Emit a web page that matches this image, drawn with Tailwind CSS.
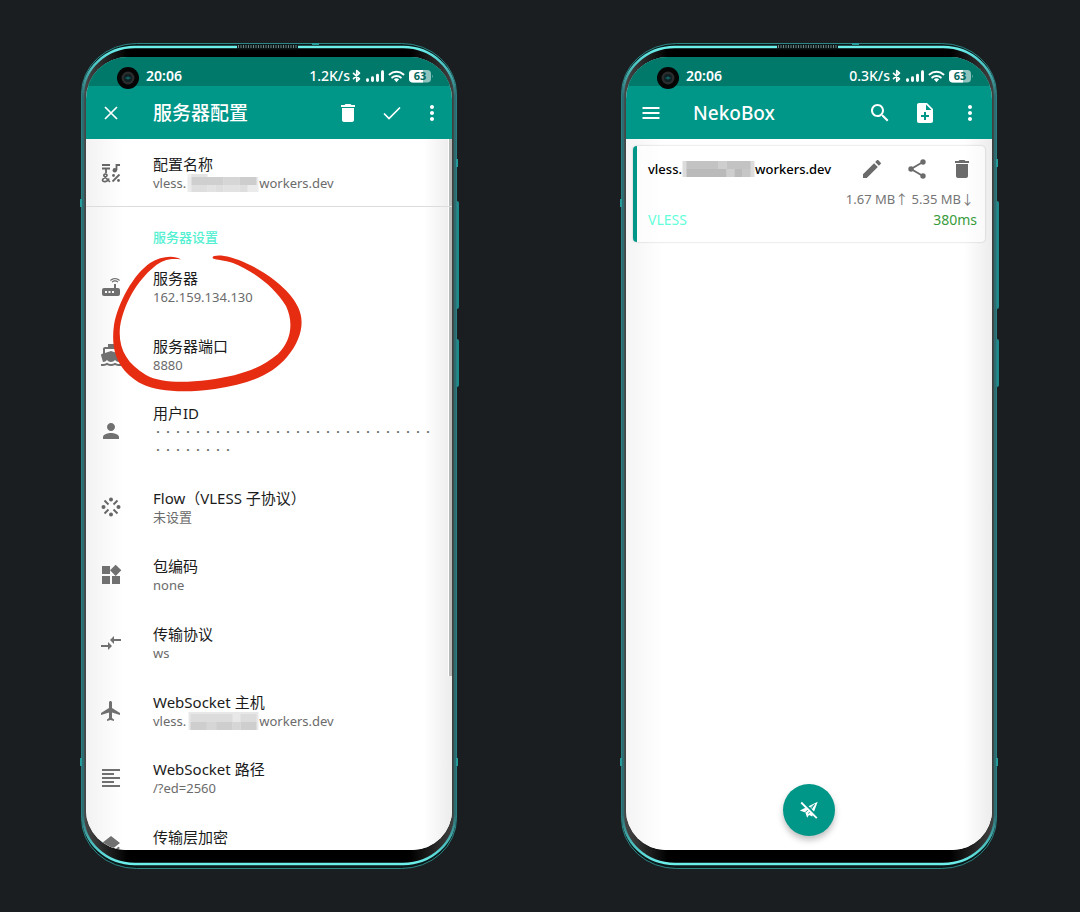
<!DOCTYPE html>
<html lang="zh-CN">
<head>
<meta charset="utf-8">
<meta name="viewport" content="width=device-width, initial-scale=1">
<title>NekoBox</title>
<script src="https://cdn.jsdelivr.net/npm/@tailwindcss/browser@4"></script>
</head>
<body class="min-h-screen bg-[#1a1e20] font-['Noto_Sans','Noto_Sans_CJK_SC',sans-serif] text-[#1b1b1b]">

<svg class="absolute size-0" aria-hidden="true">
  <defs>
    <linearGradient id="rim" x1="0" x2="0" y1="0" y2="1">
      <stop offset="0" stop-color="#6df0ec"/><stop offset=".02" stop-color="#4fc9c8"/><stop offset=".06" stop-color="#2c6c70"/>
      <stop offset=".94" stop-color="#2c6c70"/><stop offset=".98" stop-color="#4fc9c8"/><stop offset="1" stop-color="#6df0ec"/>
    </linearGradient>
    <linearGradient id="sheen" x1="0" x2="1" y1="0" y2="0">
      <stop offset="0" stop-color="#4a4a4a"/><stop offset=".12" stop-color="#000"/><stop offset=".88" stop-color="#000"/><stop offset="1" stop-color="#444"/>
    </linearGradient>
    <symbol id="frame" viewBox="0 0 380 828">
      <path d="M375 159h2q2 0 2 2v104q0 2-2 2h-2zM375 297h2q2 0 2 2v44q0 2-2 2h-2z" fill="#1f8a8b"/>
      <rect x="1.500" y="1.500" width="375" height="825" rx="55" ry="50" fill="#0b1819" stroke="#2c8585"/>
      <rect x="3" y="5" width="372" height="818" rx="52" ry="48" fill="url(#sheen)"/>
      <rect x="3" y="5" width="372" height="817" rx="52" ry="48" fill="none" stroke="url(#rim)" stroke-width="2.500"/>
      <path d="M157 5h61" stroke="#0d1718" stroke-width="5"/>
      <path d="M158 4.500h60" stroke="#6d8585" stroke-width="3" stroke-dasharray="1 1.500"/>
      <path d="M232 2h7M1 157v8M1 716v8M377 117v8M377 716v8" stroke="#259b9b" stroke-width="2"/>
    </symbol>
    <symbol id="camera" viewBox="0 0 22 22">
      <circle cx="11" cy="11" r="11" fill="#050505"/><circle cx="11" cy="11" r="6.500" fill="#2a2c2d"/><circle cx="11" cy="11" r="4" fill="#102022"/><path d="M8.500 11h5M11 9.500v3" stroke="#11777b"/>
    </symbol>
    <symbol id="status" viewBox="0 0 82 14">
      <path d="M1.500 4.300l6 5.500L4.700 12.500V1.500l2.800 2.700-6 5.500" fill="none" stroke="#fff" stroke-width="1.600" stroke-linejoin="round" stroke-linecap="round"/>
      <path d="M15.500 11.600v-.8M20.500 11.600V8.800M25.500 11.600V6.200M30.500 11.600V2.800" stroke="#fff" stroke-width="2.900" stroke-linecap="round"/>
      <path d="M37.500 5.400a10.500 10.500 0 0 1 14 0M40.200 8.600a6.300 6.300 0 0 1 8.600 0" fill="none" stroke="#fff" stroke-width="2" stroke-linecap="round"/>
      <path d="M41.900 10.300a4 4 0 0 1 5.200 0l-2.600 2.900z" fill="#fff"/>
      <rect x="57" y="1" width="22" height="12.500" rx="4" fill="#8fc3bd"/><path d="M61 1h10v12.500H61a4 4 0 0 1-4-4V5a4 4 0 0 1 4-4z" fill="#fff"/><path d="M80 5.500q1.500 1.700 0 3.500z" fill="#8fc3bd"/>
      <text x="68" y="11.200" text-anchor="middle" font-family="Noto Sans, sans-serif" font-size="11" font-weight="700" fill="#05695d">63</text>
    </symbol>
    <symbol id="trash" viewBox="0 0 24 24"><path fill="currentColor" d="M6 19c0 1.100.9 2 2 2h8c1.100 0 2-.9 2-2V7H6v12zM19 4h-3.500l-1-1h-5l-1 1H5v2h14V4z"/></symbol>
    <symbol id="more" viewBox="0 0 24 24"><path fill="currentColor" d="M12 8c1.100 0 2-.9 2-2s-.9-2-2-2-2 .9-2 2 .9 2 2 2zm0 2c-1.100 0-2 .9-2 2s.9 2 2 2 2-.9 2-2-.9-2-2-2zm0 6c-1.100 0-2 .9-2 2s.9 2 2 2 2-.9 2-2-.9-2-2-2z"/></symbol>
    <symbol id="mosaic-top" viewBox="0 0 72 18">
      <path fill="#ebebeb" d="M1 3h71v15H1z"/><path fill="#f0f0f0" d="M1 0h12v3H1z"/><path fill="#e4e4e4" d="M5 0h16v3H5z"/><path fill="#cfcfcf" d="M5 3h32v8H5z"/><path fill="#d6d6d6" d="M37 3h16v8H37z"/><path fill="#cdcdcd" d="M53 3h17v8H53z"/><path fill="#dedede" d="M5 11h16v7H5zM29 11h8v7h-8zM53 11h8v7h-8z"/><path fill="#e2e2e2" d="M21 11h8v7h-8zM37 11h16v7H37z"/>
    </symbol>
    <symbol id="mosaic-host" viewBox="0 0 72 18">
      <path fill="#e8e8e8" d="M2 0h70v18H2z"/><path fill="#dcdcdc" d="M4 2h42v8H4zM54 2h16v8H54z"/><path fill="#cecece" d="M4 10h42v8H4zM54 10h16v8H54z"/><path fill="#d6d6d6" d="M20 10h10v8H20zM46 10h8v8h-8z"/>
    </symbol>
    <symbol id="mosaic-card" viewBox="0 0 72 16">
      <path fill="#dcdcdc" d="M0 0h72v16H0z"/><path fill="#c3c3c3" d="M4 0h32v8H4zM44 0h24v8H44z"/><path fill="#cecece" d="M36 0h8v8h-8zM44 8h8v8h-8z"/><path fill="#bababa" d="M4 8h40v8H4zM52 8h8v8h-8z"/><path fill="#c6c6c6" d="M60 8h8v8h-8z"/>
    </symbol>
  </defs>
</svg>

<main class="grid min-h-screen grid-cols-2 place-items-center">

  <!-- Server profile editor -->
  <section class="relative h-[828px] w-[380px] px-[5px] pt-[15px] pb-5" aria-label="服务器配置">
    <svg class="absolute inset-0 h-full w-full" aria-hidden="true"><use href="#frame"/></svg>
    <div class="relative mr-[3px] ml-px flex h-full flex-col overflow-hidden rounded-t-[42px] rounded-b-[40px] bg-white">
      <header class="shrink-0 bg-[#009688] text-white">
        <div class="flex h-[29px] items-center bg-[#00796b] pt-2 pr-[18px] pl-[31px]">
          <svg class="mt-1 size-[22px]" aria-hidden="true"><use href="#camera"/></svg>
          <span class="ml-[7px] text-[14px] leading-5 font-semibold">20:06</span>
          <span class="mr-0.5 ml-auto text-[14px] leading-5 font-medium">1.2K/s</span>
          <svg class="h-[14px] w-[82px]" role="img" aria-label="电量 63%"><use href="#status"/></svg>
        </div>
        <div class="flex h-[53px] items-center pr-2 pl-[13px]">
          <button class="grid size-6 place-items-center" aria-label="关闭"><svg class="size-6" viewBox="0 0 24 24"><path d="M6 6l12 12M18 6L6 18" stroke="#fff" stroke-width="1.700"/></svg></button>
          <h1 class="ml-[30px] text-[19px] leading-6 font-medium">服务器配置</h1>
          <button class="ml-auto size-6" aria-label="删除"><svg class="size-6"><use href="#trash"/></svg></button>
          <button class="ml-5 size-6" aria-label="保存"><svg class="size-6" viewBox="0 0 24 24"><path d="M4 12.500l5 5L20 6.500" fill="none" stroke="#fff" stroke-width="1.700"/></svg></button>
          <button class="ml-4 size-6" aria-label="更多"><svg class="size-6"><use href="#more"/></svg></button>
        </div>
      </header>

      <div class="relative flex-1 overflow-hidden bg-linear-to-r from-[#f2f2f2] via-white via-10% to-white text-[15px] leading-5">
        <div class="absolute inset-y-0 right-0 w-7 bg-linear-to-r from-transparent to-[#ececec]"></div>
        <div class="absolute top-0 right-0 h-[537px] w-1 border-l border-white bg-[#b5b8b7]"></div>

        <div class="relative flex h-[68px] items-center border-b border-[#dcdcdc] pl-[13px]">
          <svg class="size-6 text-[#666]" viewBox="0 0 24 24" aria-hidden="true"><path d="M3 4h8M3 7.500h8M7 7.500V12M17.500 4v5M16.600 4H21" stroke="currentColor" stroke-width="1.800"/><circle cx="15.800" cy="9.300" r="2.200" fill="currentColor"/><path d="M20.500 13.500l-7 7" stroke="currentColor" stroke-width="1.800"/><circle cx="14.500" cy="14.500" r="1.400" fill="currentColor"/><circle cx="19.500" cy="19.500" r="1.400" fill="currentColor"/><path d="M11 21l-6-6c-1-2 3-3 3-.5C8 16 3.500 17 3.500 19c0 2.500 5 2.500 6.500-1.500" fill="none" stroke="currentColor" stroke-width="1.700"/></svg>
          <div class="ml-[30px]"><h3>配置名称</h3><p class="flex items-center text-[13px] leading-[18px] text-[#6b6b6b]">vless.<svg class="h-[18px] w-[73px]" role="img" aria-label="已遮盖"><use href="#mosaic-top"/></svg>workers.dev</p></div>
        </div>

        <h2 class="relative mt-5 ml-[67px] text-[13px] leading-5 font-medium text-[#54f0d2]">服务器设置</h2>

        <div class="relative mt-[6px] flex h-[68px] items-center pl-[13px]">
          <svg class="size-6 text-[#707070]" viewBox="0 0 24 24" aria-hidden="true"><path fill="currentColor" d="M20.200 5.900l.8-.8C19.600 3.700 17.800 3 16 3s-3.600.7-5 2.100l.8.8C13 4.800 14.500 4.200 16 4.200s3 .6 4.200 1.700zm-.9.800c-.9-.9-2.100-1.400-3.300-1.400s-2.400.5-3.300 1.400l.8.8c.7-.7 1.600-1 2.500-1s1.800.3 2.500 1l.8-.8zM19 13h-2V9h-2v4H5c-1.100 0-2 .9-2 2v4c0 1.100.9 2 2 2h14c1.100 0 2-.9 2-2v-4c0-1.100-.9-2-2-2zM8 18H6v-2h2v2zm3.500 0h-2v-2h2v2zm3.500 0h-2v-2h2v2z"/></svg>
          <div class="ml-[30px]"><h3>服务器</h3><p class="text-[13px] leading-[18px] text-[#6b6b6b]">162.159.134.130</p></div>
        </div>
        <div class="relative flex h-[68px] items-center pl-[13px]">
          <svg class="size-6 text-[#707070]" viewBox="0 0 24 24" aria-hidden="true"><path fill="currentColor" d="M20 21c-1.390 0-2.780-.47-4-1.320-2.440 1.710-5.560 1.710-8 0C6.780 20.530 5.390 21 4 21H2v2h2c1.380 0 2.740-.35 4-.99 2.520 1.290 5.480 1.290 8 0 1.260.65 2.620.99 4 .99h2v-2h-2zM3.950 19H4c1.600 0 3.020-.88 4-2 .98 1.120 2.400 2 4 2s3.020-.88 4-2c.98 1.120 2.400 2 4 2h.05l1.890-6.680c.08-.26.06-.54-.06-.78s-.34-.42-.6-.5L20 10.620V6c0-1.100-.9-2-2-2h-3V1H9v3H6c-1.100 0-2 .9-2 2v4.620l-1.290.42c-.26.08-.48.26-.6.5s-.15.520-.06.780L3.950 19zM6 6h12v3.970L12 8 6 9.970V6z"/></svg>
          <div class="ml-[30px]"><h3>服务器端口</h3><p class="text-[13px] leading-[18px] text-[#6b6b6b]">8880</p></div>
        </div>
        <div class="relative flex h-[84px] items-start pt-[14px] pl-[13px]">
          <svg class="mt-4 size-6 shrink-0 text-[#707070]" viewBox="0 0 24 24" aria-hidden="true"><path fill="currentColor" d="M12 12c2.210 0 4-1.790 4-4s-1.790-4-4-4-4 1.790-4 4 1.790 4 4 4zm0 2c-2.670 0-8 1.340-8 4v2h16v-2c0-2.660-5.330-4-8-4z"/></svg>
          <div class="ml-[30px] w-[285px]"><h3>用户ID</h3><p class="font-['Noto_Sans_CJK_SC'] text-[10px] leading-[18px] break-all text-[#6b6b6b]">····································</p></div>
        </div>
        <div class="relative flex h-[68px] items-center pl-[13px]">
          <svg class="size-6 text-[#666]" viewBox="0 0 24 24" aria-hidden="true"><g fill="currentColor"><circle cx="12" cy="4.500" r="2"/><circle cx="12" cy="19.500" r="2"/><circle cx="4.500" cy="12" r="2"/><circle cx="19.500" cy="12" r="2"/></g><path d="M5.500 5.500l4 4M18.500 5.500l-4 4M5.500 18.500l4-4M18.500 18.500l-4-4" stroke="currentColor" stroke-width="1.900"/></svg>
          <div class="ml-[30px]"><h3>Flow（VLESS 子协议）</h3><p class="text-[13px] leading-[18px] text-[#6b6b6b]">未设置</p></div>
        </div>
        <div class="relative flex h-[68px] items-center pl-[13px]">
          <svg class="size-6 text-[#707070]" viewBox="0 0 24 24" aria-hidden="true"><path fill="currentColor" d="M13 13v8h8v-8h-8zM3 21h8v-8H3v8zM3 3v8h8V3H3zm13.660-1.310L11 7.340 16.660 13l5.660-5.660-5.660-5.650z"/></svg>
          <div class="ml-[30px]"><h3>包编码</h3><p class="text-[13px] leading-[18px] text-[#6b6b6b]">none</p></div>
        </div>
        <div class="relative flex h-[68px] items-center pl-[13px]">
          <svg class="size-6 text-[#707070]" viewBox="0 0 24 24" aria-hidden="true"><path fill="currentColor" d="M9.010 14H2v2h7.010v3L13 15l-3.990-4v3zm5.980-1v-3H22V8h-7.010V5L11 9l3.990 4z"/></svg>
          <div class="ml-[30px]"><h3>传输协议</h3><p class="text-[13px] leading-[18px] text-[#6b6b6b]">ws</p></div>
        </div>
        <div class="relative flex h-[67px] items-center pl-[13px]">
          <svg class="size-6 text-[#707070]" viewBox="0 0 24 24" aria-hidden="true"><path fill="currentColor" d="M21 16v-2l-8-5V3.500c0-.83-.67-1.500-1.500-1.500S10 2.670 10 3.500V9l-8 5v2l8-2.500V19l-2 1.500V22l3.500-1 3.500 1v-1.500L13 19v-5.500l8 2.500z"/></svg>
          <div class="ml-[30px]"><h3>WebSocket 主机</h3><p class="flex items-center text-[13px] leading-[18px] text-[#6b6b6b]">vless.<svg class="h-[18px] w-[73px]" role="img" aria-label="已遮盖"><use href="#mosaic-host"/></svg>workers.dev</p></div>
        </div>
        <div class="relative flex h-[68px] items-center pl-[13px]">
          <svg class="size-6 text-[#707070]" viewBox="0 0 24 24" aria-hidden="true"><path fill="currentColor" d="M15 15H3v2h12v-2zm0-8H3v2h12V7zM3 13h18v-2H3v2zm0 8h18v-2H3v2zM3 3v2h18V3H3z"/></svg>
          <div class="ml-[30px]"><h3>WebSocket 路径</h3><p class="text-[13px] leading-[18px] text-[#6b6b6b]">/?ed=2560</p></div>
        </div>
        <div class="relative flex items-start pt-[15px] pl-[13px]">
          <svg class="mt-[7px] size-6 text-[#707070]" viewBox="0 0 24 24" aria-hidden="true"><path fill="currentColor" d="M11.990 18.540l-7.370-5.730L3 14.070l9 7 9-7-1.630-1.270-7.380 5.740zM12 16l7.360-5.730L21 9l-9-7-9 7 1.630 1.270L12 16z"/></svg>
          <h3 class="ml-[30px]">传输层加密</h3>
        </div>
      </div>
    </div>
    <!-- Hand-drawn marker ring over the server address and port -->
    <svg class="pointer-events-none absolute top-[210px] left-[30px] h-[144px] w-[196px]" viewBox="110 252 196 144" aria-hidden="true">
      <path fill="#e62d12" d="M181 259.500C174 255 161 256 150 263C134 274 118 302 114 325C110 354 120 372 142 384C158 392 186 393 215 389C247 384 271 376 287 357C302 339 305 321 298 307C287 283 246 259 224 256C217 255 211 256 213 258.500C217 260 224 260 233 263C253 271 274 286 286 306C294 323 291 341 278 354C260 369 239 376 208 380C184 383 160 383 146 375C126 363 118 348 120 327C124 303 137 281 154 267C162 260 170 258 181 259.500Z"/>
    </svg>
  </section>

  <!-- Profile list -->
  <section class="relative h-[828px] w-[380px] px-[5px] pt-[15px] pb-5" aria-label="NekoBox">
    <svg class="absolute inset-0 h-full w-full" aria-hidden="true"><use href="#frame"/></svg>
    <div class="relative mr-[3px] ml-px flex h-full flex-col overflow-hidden rounded-t-[42px] rounded-b-[40px] bg-white">
      <header class="shrink-0 bg-[#009688] text-white">
        <div class="flex h-[29px] items-center bg-[#00796b] pt-2 pr-[18px] pl-[31px]">
          <svg class="mt-1 size-[22px]" aria-hidden="true"><use href="#camera"/></svg>
          <span class="ml-[7px] text-[14px] leading-5 font-semibold">20:06</span>
          <span class="mr-0.5 ml-auto text-[14px] leading-5 font-medium">0.3K/s</span>
          <svg class="h-[14px] w-[82px]" role="img" aria-label="电量 63%"><use href="#status"/></svg>
        </div>
        <div class="flex h-[53px] items-center pr-2.5 pl-[13px]">
          <button class="size-6" aria-label="菜单"><svg class="size-6" viewBox="0 0 24 24"><path d="M3.500 7h17M3.500 12h17M3.500 17h17" stroke="#fff" stroke-width="1.900"/></svg></button>
          <h1 class="ml-[30px] text-[19px] leading-6 font-medium">NekoBox</h1>
          <button class="ml-auto size-6" aria-label="搜索"><svg class="size-6" viewBox="0 0 24 24"><path fill="currentColor" d="M15.500 14h-.79l-.28-.27C15.410 12.590 16 11.110 16 9.500 16 5.910 13.090 3 9.500 3S3 5.910 3 9.500 5.910 16 9.500 16c1.610 0 3.090-.59 4.230-1.570l.27.28v.79l5 4.990L20.490 19l-4.990-5zm-6 0C7.010 14 5 11.990 5 9.500S7.010 5 9.500 5 14 7.010 14 9.500 11.990 14 9.500 14z"/></svg></button>
          <button class="ml-[21px] size-6" aria-label="添加配置"><svg class="size-6" viewBox="0 0 24 24"><path fill="currentColor" d="M14 2H6c-1.100 0-1.990.9-1.990 2L4 20c0 1.100.89 2 1.990 2H18c1.100 0 2-.9 2-2V8l-6-6zm2 14h-3v3h-2v-3H8v-2h3v-3h2v3h3v2zm-3-7V3.500L18.500 9H13z"/></svg></button>
          <button class="ml-[21px] size-6" aria-label="更多"><svg class="size-6"><use href="#more"/></svg></button>
        </div>
      </header>

      <div class="relative flex-1 bg-linear-to-r from-[#f4f4f4] via-white via-10% to-white px-[7px] pt-[7px]">
        <div class="absolute inset-y-0 right-0 w-7 bg-linear-to-r from-transparent to-[#ececec]"></div>
        <article class="relative h-24 overflow-hidden rounded-sm border-l-4 border-[#009688] bg-white/60 pt-[11px] pr-2 pl-[11px] shadow-[0_0_2px_#00000040]">
          <div class="flex items-center">
            <h2 class="flex items-center text-[13px] leading-[18px] font-medium text-black">vless.<svg class="h-4 w-[73px]" role="img" aria-label="已遮盖"><use href="#mosaic-card"/></svg>workers.dev</h2>
            <div class="ml-auto flex gap-[21px] pr-[3px] text-[#6b6b6b]">
              <button class="size-6" aria-label="编辑"><svg class="size-6" viewBox="0 0 24 24"><path fill="currentColor" d="M3 17.250V21h3.750L17.810 9.940l-3.750-3.750L3 17.250zM20.710 7.040c.39-.39.39-1.020 0-1.410l-2.340-2.340c-.39-.39-1.020-.39-1.410 0l-1.830 1.830 3.750 3.750 1.830-1.830z"/></svg></button>
              <button class="size-6" aria-label="分享"><svg class="size-6" viewBox="0 0 24 24"><path d="M18 5L6 12l12 7" fill="none" stroke="currentColor" stroke-width="1.900"/><g fill="currentColor"><circle cx="18" cy="5" r="2.700"/><circle cx="6" cy="12" r="2.700"/><circle cx="18" cy="19" r="2.700"/></g></svg></button>
              <button class="size-6" aria-label="删除"><svg class="size-6"><use href="#trash"/></svg></button>
            </div>
          </div>
          <p class="mt-2 pr-[3px] text-right text-[13px] leading-5 text-[#757575]">1.67 MB↑ 5.35 MB↓</p>
          <p class="flex justify-between text-[14px] leading-[22px]"><span class="text-[#64ffda]">VLESS</span><span class="text-[#389b3b]">380ms</span></p>
        </article>
        <button class="absolute bottom-3.5 left-1/2 grid size-[52px] -translate-x-1/2 place-items-center rounded-full bg-[#009688] shadow-[0_4px_6px_#00000040]" aria-label="连接">
          <svg class="size-[22px]" viewBox="0 0 24 24"><path d="M21.500 3L2 12.500l6 2.200 2 5.800 2-3 3.500 1.500z" fill="#fff"/><path d="M8 14.500L18 6l-6.500 10" fill="none" stroke="#009688"/><path d="M5 3l17 17" stroke="#009688" stroke-width="2.500"/><path d="M3.500 3.800l17 17" stroke="#fff" stroke-width="2"/></svg>
        </button>
      </div>
    </div>
  </section>
</main>
</body>
</html>
